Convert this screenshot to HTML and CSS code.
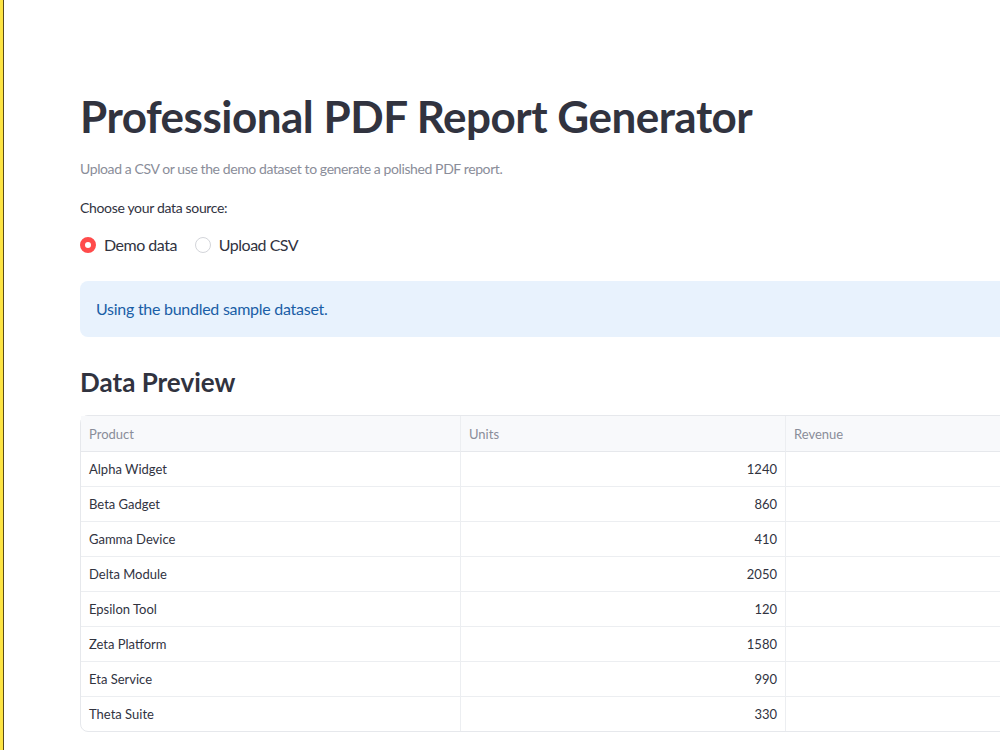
FILE: index.html
```html
<!DOCTYPE html>
<html lang="en">
<head>
    <meta charset="UTF-8">
    <meta name="viewport" content="width=device-width, initial-scale=1.0">
    <title>Professional PDF Report Generator</title>
    <link rel="stylesheet" href="styles.css">
</head>
<body>
    <div class="edge"></div>
    <div class="main">
        <h1>Professional PDF Report Generator</h1>
        <p class="caption">Upload a CSV or use the demo dataset to generate a polished PDF report.</p>

        <p class="label">Choose your data source:</p>
        <div class="radio-group">
            <label class="radio checked"><span class="dot"></span>Demo data</label>
            <label class="radio"><span class="dot"></span>Upload CSV</label>
        </div>

        <div class="info">Using the bundled sample dataset.</div>

        <h3>Data Preview</h3>
        <table class="grid">
            <thead>
                <tr><th class="col-product">Product</th><th class="col-units">Units</th><th>Revenue</th></tr>
            </thead>
            <tbody>
                <tr><td>Alpha Widget</td><td class="num">1240</td><td></td></tr>
                <tr><td>Beta Gadget</td><td class="num">860</td><td></td></tr>
                <tr><td>Gamma Device</td><td class="num">410</td><td></td></tr>
                <tr><td>Delta Module</td><td class="num">2050</td><td></td></tr>
                <tr><td>Epsilon Tool</td><td class="num">120</td><td></td></tr>
                <tr><td>Zeta Platform</td><td class="num">1580</td><td></td></tr>
                <tr><td>Eta Service</td><td class="num">990</td><td></td></tr>
                <tr><td>Theta Suite</td><td class="num">330</td><td></td></tr>
            </tbody>
        </table>
    </div>
</body>
</html>
```

FILE: styles.css
```css
html, body {
    margin: 0;
    height: 100%;
    overflow: hidden;
}

body {
    font-family: Lato, "Open Sans", sans-serif;
    color: #31333f;
    background-color: #ffffff;
    display: flex;
}

.edge {
    width: 3px;
    flex: none;
    background-color: #fde443;
    border-right: 1px solid #5a4a1a;
}

.main {
    flex: none;
    width: 1100px;
    padding: 92px 0 0 76px;
}

h1 {
    font-size: 44px;
    font-weight: 700;
    margin: 0 0 20px 0;
    line-height: 1.1;
    letter-spacing: -0.5px;
}

.caption {
    font-size: 14px;
    color: #8a8d99;
    margin: 0 0 22px 0;
    letter-spacing: -0.4px;
}

.label {
    font-size: 14px;
    margin: 0 0 19px 0;
    letter-spacing: -0.33px;
}

.radio-group {
    display: flex;
    gap: 18px;
    margin-bottom: 27px;
}

.radio {
    display: flex;
    align-items: center;
    font-size: 16px;
    gap: 8px;
    letter-spacing: -0.5px;
}

.dot {
    width: 16px;
    height: 16px;
    box-sizing: border-box;
    border-radius: 50%;
    border: 1px solid #d3d5da;
    background-color: #fff;
}

.radio.checked .dot {
    border: 5px solid #ff4b4b;
    background-color: #fff;
}

.info {
    background-color: #e8f2fd;
    color: #1a5ea6;
    font-size: 16px;
    padding: 18px 16px 19px 16px;
    border-radius: 8px 0 0 8px;
    margin-bottom: 29px;
    letter-spacing: -0.27px;
}

h3 {
    font-size: 26px;
    font-weight: 700;
    margin: 0 0 17px 0;
}

.grid {
    width: 100%;
    border-collapse: separate;
    border-spacing: 0;
    border: 1px solid #e6e8ec;
    border-radius: 8px 0 0 8px;
    font-size: 13px;
}

.grid th, .grid td {
    height: 34px;
    padding: 0 8px;
    text-align: left;
    border-right: 1px solid #eceef1;
    border-bottom: 1px solid #eceef1;
}

.grid tbody tr:last-child td {
    border-bottom: none;
}

.grid th {
    height: 35px;
    font-weight: 400;
    color: #8a8d99;
    background-color: #f8f9fb;
    border-bottom-color: #e6e8ec;
}

.grid td {
    color: #31333f;
}

.grid .num {
    text-align: right;
}

.col-product {
    width: 363px;
}

.col-units {
    width: 308px;
}
```
